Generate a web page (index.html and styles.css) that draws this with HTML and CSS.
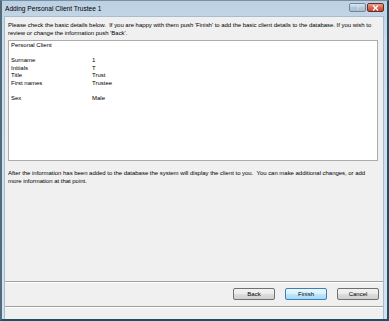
FILE: index.html
```html
<!DOCTYPE html>
<html lang="en">
<head>
    <meta charset="UTF-8">
    <title>Adding Personal Client Trustee 1</title>
    <link rel="stylesheet" href="styles.css">
</head>
<body>
    <div class="window">
        <div class="titlebar">
            <span class="title">Adding Personal Client Trustee 1</span>
            <div class="caption-buttons">
                <span class="cap-btn help">?</span>
                <span class="cap-btn close">
                    <svg width="7" height="6" viewBox="0 0 7 6"><path d="M1 0.5 L6 5.5 M6 0.5 L1 5.5" stroke="#fff" stroke-width="1.4"/></svg>
                </span>
            </div>
        </div>
        <div class="client">
            <p class="intro">Please check the basic details below.&nbsp; If you are happy with them push 'Finish' to add the basic client details to the database. If you wish to review or change the information push 'Back'.</p>
            <div class="summary">
                <div class="summary-head">Personal Client</div>
                <div class="summary-gap"></div>
                <div class="row"><span class="label">Surname</span><span class="value">1</span></div>
                <div class="row"><span class="label">Initials</span><span class="value">T</span></div>
                <div class="row"><span class="label">Title</span><span class="value">Trust</span></div>
                <div class="row"><span class="label">First names</span><span class="value">Trustee</span></div>
                <div class="summary-gap"></div>
                <div class="row"><span class="label">Sex</span><span class="value">Male</span></div>
            </div>
            <p class="after">After the information has been added to the database the system will display the client to you.&nbsp; You can make additional changes, or add more information at that point.</p>
            <div class="spacer"></div>
            <div class="button-row">
                <button class="btn">Back</button>
                <button class="btn default">Finish</button>
                <button class="btn">Cancel</button>
            </div>
            <div class="status"></div>
        </div>
    </div>
</body>
</html>
```

FILE: styles.css
```css
body {
    margin: 0;
    font-family: 'Liberation Sans', Arial, sans-serif;
    color: #000;
}
.window {
    width: 389px;
    height: 321px;
    box-sizing: border-box;
    display: flex;
    flex-direction: column;
    border-top: 1px solid #7890a2;
    border-left: 2px solid #506b7b;
    border-right: 2px solid #1f4f66;
    border-bottom: 2px solid #1f4f66;
    padding: 0 3px 0 2px;
    background: linear-gradient(#bcd0e3, #cddded 40px, #d3e2ee);
}
.titlebar {
    height: 15px;
    display: flex;
    align-items: flex-start;
    justify-content: space-between;
    padding: 1px 0 0 1px;
    box-sizing: border-box;
}
.title {
    font-size: 6.6px;
    line-height: 14px;
    color: #000;
}
.caption-buttons {
    display: flex;
    gap: 1px;
    margin-top: 1px;
}
.cap-btn {
    width: 17px;
    height: 9px;
    box-sizing: border-box;
    border: 1px solid #6f8598;
    border-radius: 2px;
    display: flex;
    align-items: center;
    justify-content: center;
    font-size: 6px;
    font-weight: bold;
    color: #fff;
}
.help {
    background: linear-gradient(#dfe9f2, #b4c8da 50%, #a9bfd3);
    color: #f4f8fb;
    text-shadow: 0 0 1px #6a8094;
}
.close {
    border-color: #6b2a22;
    background: linear-gradient(#e8a493, #d46a55 50%, #c2442b);
}
.client {
    flex: 1;
    display: flex;
    flex-direction: column;
    background: #f0f0f0;
    font-size: 6px;
    line-height: 8px;
    border: 1px solid #a9bccc;
    border-bottom: none;
}
.intro {
    margin: 4px 6px 0 3px;
    letter-spacing: -0.03px;
}
.summary {
    margin: 3px 5px 0 3px;
    height: 121px;
    box-sizing: border-box;
    background: #fff;
    border: 1px solid #acacac;
    padding: 1px 2px;
    line-height: 7.6px;
}
.summary-gap {
    height: 7.6px;
}
.row {
    display: flex;
}
.label {
    width: 81px;
}
.after {
    margin: 8px 6px 0 3px;
    letter-spacing: -0.03px;
}
.spacer {
    flex: 1;
}
.button-row {
    display: flex;
    justify-content: flex-end;
    gap: 10px;
    padding: 6px 4px 6px 0;
    border-top: 1px solid #a0a0a0;
    box-shadow: inset 0 1px 0 #fff;
}
.btn {
    width: 42px;
    height: 12px;
    padding: 0;
    font-family: inherit;
    font-size: 6px;
    color: #000;
    border: 1px solid #707070;
    border-radius: 2px;
    background: linear-gradient(#f2f2f2, #ebebeb 50%, #dddddd 51%, #cfcfcf);
}
.btn.default {
    border-color: #3c7fb1;
    background: linear-gradient(#eaf6fd, #d9f0fc 50%, #bee6fd 51%, #a7d9f5);
}
.status {
    height: 12px;
    border-top: 1px solid #a0a0a0;
    box-shadow: inset 0 1px 0 #fff;
}
```
